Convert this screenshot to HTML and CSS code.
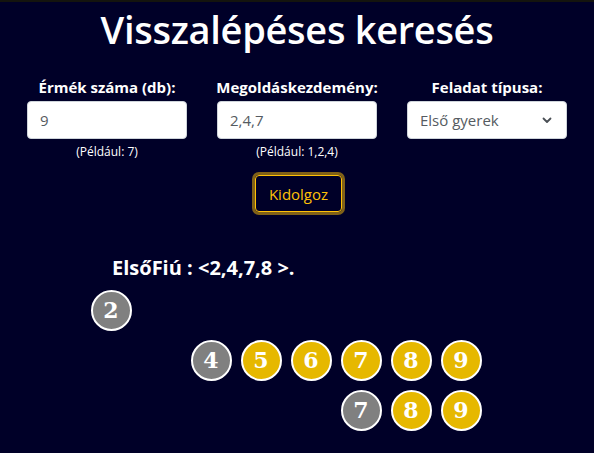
FILE: index.html
```html
<!DOCTYPE html>
<html lang="hu">
<head>
<meta charset="utf-8">
<title>Visszalépéses keresés</title>
<link rel="stylesheet" href="styles.css">
</head>
<body>
<h1 class="title">Visszalépéses keresés</h1>
<div class="form">
  <div class="field">
    <label class="label" for="n">Érmék száma (db):</label>
    <input class="input" id="n" type="text" value="9">
    <span class="hint">(Például: 7)</span>
  </div>
  <div class="field">
    <label class="label" for="s">Megoldáskezdemény:</label>
    <input class="input" id="s" type="text" value="2,4,7">
    <span class="hint">(Például: 1,2,4)</span>
  </div>
  <div class="field">
    <label class="label" for="t">Feladat típusa:</label>
    <div class="select">
      <span>Első gyerek</span>
      <svg class="chev" width="10" height="7" viewBox="0 0 10 7"><path d="M1.5 1.5 L5 5 L8.5 1.5" fill="none" stroke="#4a4f55" stroke-width="1.8" stroke-linecap="round" stroke-linejoin="round"/></svg>
    </div>
  </div>
</div>
<div class="actions">
  <button class="btn" type="button">Kidolgoz</button>
</div>
<p class="result">ElsőFiú : &lt;2,4,7,8 &gt;.</p>
<div class="tree">
  <div class="coin grey c1 r1">2</div>
  <div class="coin grey c3 r2">4</div>
  <div class="coin gold c4 r2">5</div>
  <div class="coin gold c5 r2">6</div>
  <div class="coin gold c6 r2">7</div>
  <div class="coin gold c7 r2">8</div>
  <div class="coin gold c8 r2">9</div>
  <div class="coin grey c6 r3">7</div>
  <div class="coin gold c7 r3">8</div>
  <div class="coin gold c8 r3">9</div>
</div>
</body>
</html>
```
FILE: styles.css
```css
html, body {
  margin: 0;
  padding: 0;
}
body {
  background: #000028;
  color: #fff;
  font-family: "Open Sans", "Noto Sans", sans-serif;
  border-top: 2px solid #14140e;
  height: 451px;
  overflow: hidden;
}
.title {
  margin: 0;
  padding-top: 2px;
  text-align: center;
  font-size: 38px;
  font-weight: 600;
  line-height: 50px;
  letter-spacing: -0.3px;
}
.form {
  display: grid;
  grid-template-columns: repeat(3, 160px);
  column-gap: 30px;
  justify-content: center;
  margin-top: 23px;
}
.field {
  display: flex;
  flex-direction: column;
  align-items: center;
}
.label {
  font-weight: 700;
  font-size: 15px;
  line-height: 20px;
  margin-bottom: 4px;
}
.input, .select {
  box-sizing: border-box;
  width: 160px;
  height: 38px;
  background: #fff;
  border: 1px solid #ced4da;
  border-radius: 4px;
  padding: 0 12px;
  font-family: "Open Sans", sans-serif;
  font-size: 15px;
  color: #555b61;
  outline: none;
}
.select {
  display: flex;
  align-items: center;
  justify-content: space-between;
}
.chev {
  margin-right: 2px;
}
.hint {
  font-size: 12px;
  line-height: 14px;
  margin-top: 6px;
}
.actions {
  display: flex;
  justify-content: center;
  margin-top: 16px;
}
.btn {
  box-sizing: border-box;
  width: 87px;
  height: 37px;
  margin-left: 3px;
  background: transparent;
  color: #ffc107;
  border: 1px solid #ffc107;
  border-radius: 4px;
  box-shadow: 0 0 0 3px rgba(255, 193, 7, 0.5);
  font-family: "Open Sans", sans-serif;
  font-size: 15px;
  padding: 0;
}
.result {
  margin: 45px 0 0 112px;
  font-weight: 700;
  font-size: 20px;
  line-height: 22px;
}
.tree {
  display: grid;
  grid-template-columns: repeat(9, 50px);
  grid-template-rows: repeat(3, 50px);
  margin: 6px 0 0 36px;
}
.coin {
  box-sizing: border-box;
  width: 41px;
  height: 41px;
  border: 2px solid #fff;
  border-radius: 50%;
  justify-self: center;
  align-self: center;
  display: flex;
  align-items: center;
  justify-content: center;
  font-family: "DejaVu Serif", serif;
  font-weight: 700;
  font-size: 22px;
  color: #fff;
}
.grey { background: #808080; }
.gold { background: #e6b800; }
.c1 { grid-column: 2; }
.c3 { grid-column: 4; }
.c4 { grid-column: 5; }
.c5 { grid-column: 6; }
.c6 { grid-column: 7; }
.c7 { grid-column: 8; }
.c8 { grid-column: 9; }
.r1 { grid-row: 1; }
.r2 { grid-row: 2; }
.r3 { grid-row: 3; }
```
